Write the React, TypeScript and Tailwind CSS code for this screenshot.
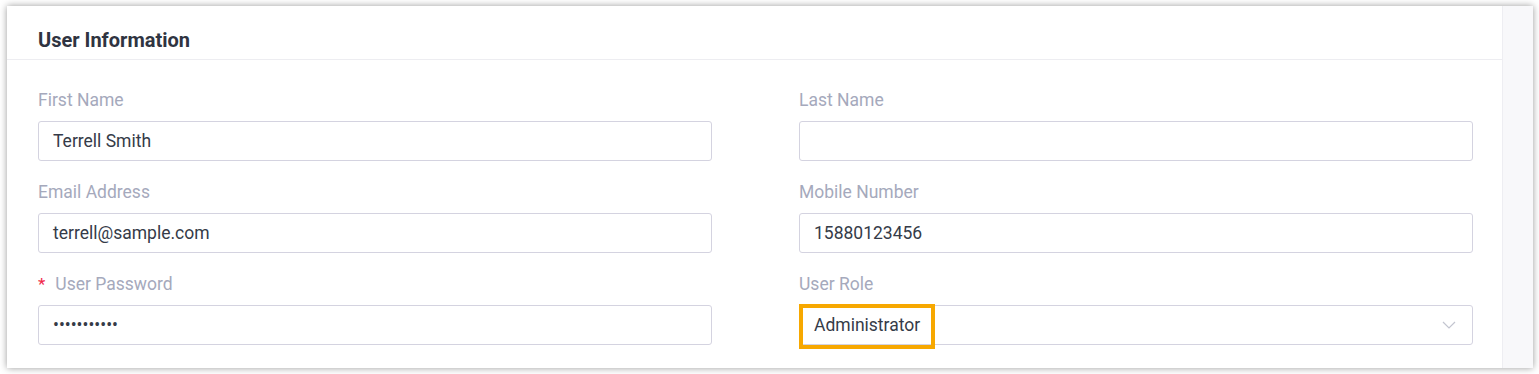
import React from "react";

const Label = ({ children, required }: { children: React.ReactNode; required?: boolean }) => (
  <div className="h-6 leading-6 text-[17.5px] text-[#a5a9bc] mb-[9px] flex items-center">
    {required && <span className="text-[#f0284a] mr-[10px] text-[17px]">*</span>}
    {children}
  </div>
);

const Input = ({ value }: { value: string }) => (
  <div className="h-10 border border-[#d4d3e0] rounded-[3px] px-[14px] flex items-center text-[17.5px] text-[#353b48] bg-white">
    {value}
  </div>
);

export default function App() {
  return (
    <div className="w-[1539px] h-[374px] bg-white pt-[6px] pl-[7px]" style={{ fontFamily: "Roboto, 'Liberation Sans', sans-serif" }}>
      <div className="w-[1526px] h-[362px] flex bg-[#f8f8fa] shadow-[0_0_7px_rgba(0,0,0,0.4)]">
        <div className="w-[1496px] h-full bg-white border-r border-[#eeeef2] flex flex-col">
          <div className="h-[54px] border-b border-[#ededf1] pl-[31px] pt-[22px]">
            <div className="h-6 leading-6 text-[20px] font-bold text-[#2f3441]">User Information</div>
          </div>
          <div className="pl-[31px] pr-[29px] pt-[28px] grid grid-cols-2 gap-x-[87px] gap-y-[19px]">
            <div>
              <Label>First Name</Label>
              <Input value="Terrell Smith" />
            </div>
            <div>
              <Label>Last Name</Label>
              <Input value="" />
            </div>
            <div>
              <Label>Email Address</Label>
              <Input value="terrell@sample.com" />
            </div>
            <div>
              <Label>Mobile Number</Label>
              <Input value="15880123456" />
            </div>
            <div>
              <Label required>User Password</Label>
              <div className="h-10 border border-[#d4d3e0] rounded-[3px] px-[14px] flex items-center text-[17.5px] text-[#353b48]">
                •••••••••••
              </div>
            </div>
            <div>
              <Label>User Role</Label>
              <div className="relative h-10 border border-[#d4d3e0] rounded-[3px] px-[14px] flex items-center justify-between text-[17.5px] text-[#353b48]">
                <span>Administrator</span>
                <svg width="14" height="8" viewBox="0 0 14 8" className="mr-[2px]">
                  <path d="M1 1 L7 7 L13 1" fill="none" stroke="#c3c5d0" strokeWidth="1.2" />
                </svg>
                <div className="absolute left-[-1px] top-[-2px] w-[136px] h-[45px] border-[4px] border-[#f7a800]" />
              </div>
            </div>
          </div>
        </div>
      </div>
    </div>
  );
}
